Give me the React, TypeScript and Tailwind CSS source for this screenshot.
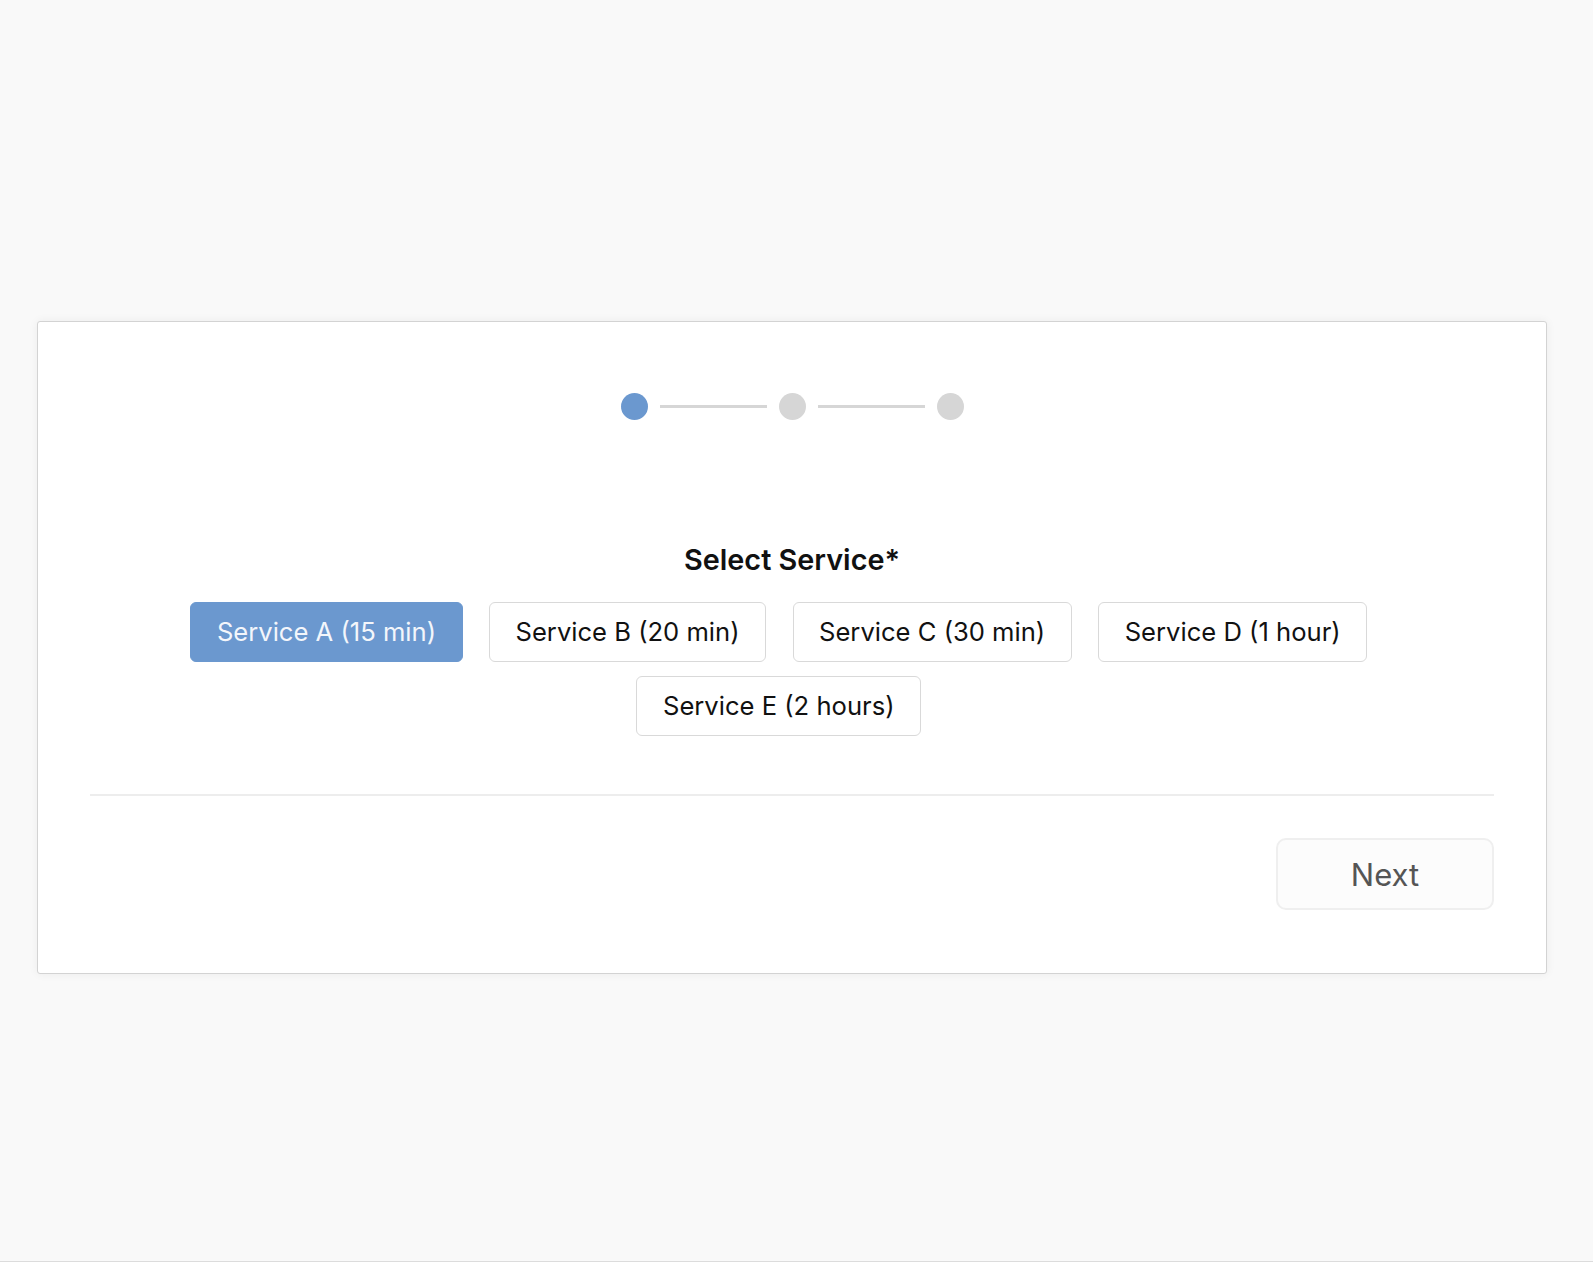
import React from "react";

const services = [
  "Service A (15 min)",
  "Service B (20 min)",
  "Service C (30 min)",
  "Service D (1 hour)",
  "Service E (2 hours)",
];

export default function App() {
  const selected = 0;
  return (
    <div
      className="h-[1262px] bg-[#f9f9f9] border-b border-[#dcdcdc] pt-[321px] pl-[37px]"
      style={{ fontFamily: "Inter, 'Noto Sans', sans-serif" }}
    >
      <div className="w-[1510px] bg-white border border-[#d3d3d3] rounded-[3px] shadow-[0_0_10px_rgba(0,0,0,0.06)] px-[52px] pt-[71px] pb-[63px]">
        {/* Stepper */}
        <div className="flex items-center justify-center gap-[12px]">
          <div className="w-[27px] h-[27px] rounded-full bg-[#6b98cf]" />
          <div className="w-[107px] h-[3px] bg-[#d6d6d6]" />
          <div className="w-[27px] h-[27px] rounded-full bg-[#d6d6d6]" />
          <div className="w-[107px] h-[3px] bg-[#d6d6d6]" />
          <div className="w-[27px] h-[27px] rounded-full bg-[#d6d6d6]" />
        </div>

        <h1 className="mt-[118px] text-center text-[28.8px] leading-[1.5] font-semibold text-[#111111]">
          Select Service*
        </h1>

        <div className="mt-[21px] flex flex-wrap justify-center">
          {services.map((s, i) => (
            <button
              key={s}
              className={
                i === selected
                  ? "mr-[26.5px] mb-[14px] h-[60px] px-[25.5px] rounded-[6px] border border-[#6b98cf] bg-[#6b98cf] text-[#f3f6fb] text-[25.6px] leading-none flex items-center"
                  : "mr-[26.5px] mb-[14px] h-[60px] px-[25.5px] rounded-[6px] border border-[#d9d9d9] bg-white text-[#111111] text-[25.6px] leading-none flex items-center"
              }
            >
              {s}
            </button>
          ))}
        </div>

        <div className="mt-[44px] h-[2px] bg-[#ededed]" />

        <div className="mt-[42px] flex justify-end">
          <button className="w-[218px] h-[72px] rounded-[10px] border-2 border-[#efefef] bg-[#fcfcfc] text-[#555555] text-[31px] leading-none flex items-center justify-center">
            Next
          </button>
        </div>
      </div>
    </div>
  );
}
